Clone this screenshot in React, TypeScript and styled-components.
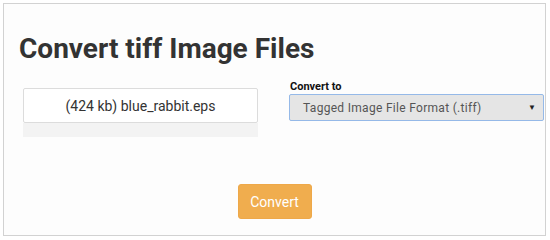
import React from "react";
import styled, { createGlobalStyle } from "styled-components";

const Global = createGlobalStyle`
  html, body { margin: 0; padding: 0; background: #ffffff; }
  body { font-family: Roboto, "Liberation Sans", Arial, sans-serif; }
`;

const Frame = styled.div`
  box-sizing: border-box;
  margin: 3px;
  width: 543px;
  height: 233px;
  border: 1px solid #d2d2d2;
  background: #fdfdfd;
  display: flex;
  flex-direction: column;
`;

const Title = styled.h1`
  margin: 29px 0 0 15px;
  font: 700 28px/32px Roboto, "Liberation Sans", Arial, sans-serif;
  color: #333333;
`;

const Row = styled.div`
  display: flex;
  margin-top: 15px;
  align-items: flex-start;
`;

const FileCol = styled.div`
  margin: 8px 0 0 19px;
  width: 235px;
  display: flex;
  flex-direction: column;
`;

const FileBox = styled.div`
  box-sizing: border-box;
  height: 35px;
  border: 1px solid #dcdcdc;
  border-radius: 2px;
  background: #ffffff;
  display: flex;
  align-items: center;
  justify-content: center;
  font-size: 14px;
  color: #333333;
`;

const Progress = styled.div`
  height: 14px;
  background: #f3f3f3;
`;

const TargetCol = styled.div`
  margin-left: 31px;
  width: 255px;
  display: flex;
  flex-direction: column;
`;

const Label = styled.label`
  font: 700 11px/13px Roboto, "Liberation Sans", Arial, sans-serif;
  color: #111111;
  margin-left: 1px;
`;

const Select = styled.div`
  box-sizing: border-box;
  margin-top: 1px;
  height: 27px;
  border: 1px solid #95b9e8;
  border-radius: 2px;
  background: #e5e5e5;
  display: flex;
  align-items: center;
  justify-content: space-between;
  padding: 0 7px 0 13px;
  font-size: 12px;
  letter-spacing: 0.3px;
  color: #555555;
`;

const Arrow = styled.span`
  font-size: 8px;
  letter-spacing: 0;
  color: #222222;
`;

const Button = styled.button`
  align-self: center;
  margin-top: 47px;
  width: 74px;
  height: 35px;
  border: 1px solid #eea849;
  border-radius: 3px;
  background: #f0ad4e;
  color: #ffffff;
  font: 400 14px Roboto, "Liberation Sans", Arial, sans-serif;
  padding: 0;
`;

export default function App() {
  return (
    <>
      <Global />
      <Frame>
        <Title>Convert tiff Image Files</Title>
        <Row>
          <FileCol>
            <FileBox>(424 kb) blue_rabbit.eps</FileBox>
            <Progress />
          </FileCol>
          <TargetCol>
            <Label>Convert to</Label>
            <Select>
              <span>Tagged Image File Format (.tiff)</span>
              <Arrow>▼</Arrow>
            </Select>
          </TargetCol>
        </Row>
        <Button>Convert</Button>
      </Frame>
    </>
  );
}
